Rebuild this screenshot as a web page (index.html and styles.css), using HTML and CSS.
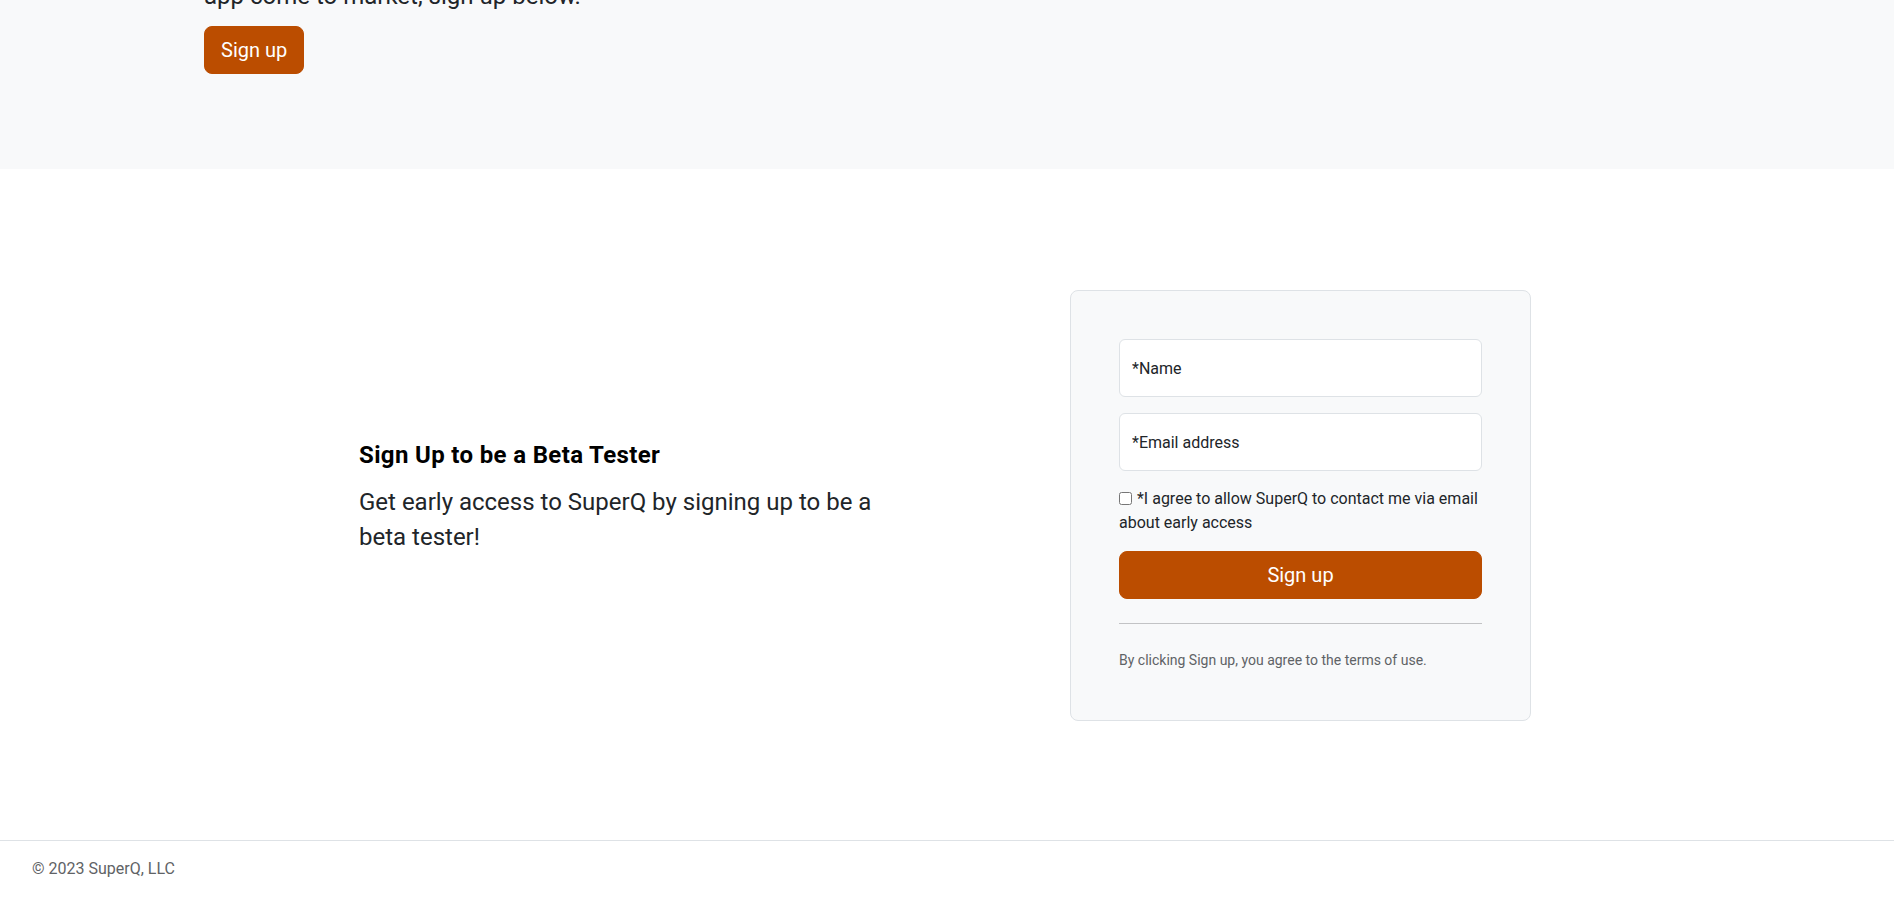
FILE: index.html
```html
<!DOCTYPE html>
<html lang="en">
<head>
<meta charset="utf-8">
<title>SuperQ</title>
<link rel="stylesheet" href="styles.css">
</head>
<body>
  <section class="intro">
    <div class="intro-inner">
      <p class="intro-lead">SuperQ is a new way to keep track of your queue. To be notified when the<br>app come to market, sign up below.</p>
      <a class="btn btn-lg" href="#signup">Sign up</a>
    </div>
  </section>

  <main class="hero" id="signup">
    <div class="hero-text">
      <h2 class="hero-title">Sign Up to be a Beta Tester</h2>
      <p class="hero-lead">Get early access to SuperQ by signing up to be a beta tester!</p>
    </div>
    <form class="signup-card">
      <input class="field" type="text" placeholder="*Name">
      <input class="field" type="email" placeholder="*Email address">
      <div class="agree">
        <label><input class="agree-box" type="checkbox"> *I agree to allow SuperQ to contact me via email about early access</label>
      </div>
      <button class="btn btn-lg btn-block" type="button">Sign up</button>
      <hr class="divider">
      <div class="terms">By clicking Sign up, you agree to the terms of use.</div>
    </form>
  </main>

  <footer class="site-footer">
    <span class="copyright">© 2023 SuperQ, LLC</span>
  </footer>
</body>
</html>
```
FILE: styles.css
```css
* { box-sizing: border-box; }

html, body {
  margin: 0;
  padding: 0;
}

body {
  font-family: Roboto, "Liberation Sans", sans-serif;
  font-size: 16px;
  line-height: 24px;
  color: #212529;
  background: #ffffff;
}

/* top band */
.intro {
  background: #f8f9fa;
  height: 169px;
  overflow: hidden;
}

.intro-inner {
  width: 1486px;
  margin: 0 auto;
  height: 169px;
  display: flex;
  flex-direction: column;
  justify-content: flex-end;
  align-items: flex-start;
  padding-bottom: 95px;
}

.intro-lead {
  font-size: 24px;
  line-height: 36px;
  margin: 0 0 12px;
}

.btn {
  display: inline-block;
  background: #bb4d00;
  color: #ffffff;
  border: 1px solid #bb4d00;
  text-decoration: none;
  font-family: inherit;
  cursor: pointer;
  text-align: center;
}

.btn-lg {
  font-size: 20px;
  line-height: 30px;
  padding: 8px 16px;
  border-radius: 8px;
}

.btn-block {
  display: block;
  width: 100%;
}

/* hero */
.hero {
  width: 1176px;
  margin: 0 auto;
  padding: 121px 4px 119px 0;
  display: grid;
  grid-template-columns: 1fr 461px;
  align-items: center;
}

.hero-text {
  max-width: 540px;
}

.hero-title {
  font-size: 24px;
  line-height: 29px;
  font-weight: 700;
  letter-spacing: 0.35px;
  color: #000000;
  margin: 0 0 15px;
}

.hero-lead {
  font-size: 24px;
  line-height: 35px;
  margin: 0 0 15px;
}

.signup-card {
  background: #f8f9fa;
  border: 1px solid #dee2e6;
  border-radius: 8px;
  padding: 48px;
  margin: 0;
}

.field {
  display: block;
  width: 100%;
  height: 58px;
  margin: 0 0 16px;
  padding: 0 12px;
  background: #ffffff;
  border: 1px solid #dee2e6;
  border-radius: 6px;
  font-family: inherit;
  font-size: 16px;
  color: #212529;
}

.field::placeholder {
  color: #212529;
  opacity: 1;
}

.agree {
  margin-bottom: 16px;
  font-size: 16px;
  line-height: 24px;
  color: #212529;
}

.agree-box {
  width: 13px;
  height: 13px;
  margin: 0 1px 0 0;
  vertical-align: -1px;
}

.divider {
  margin: 24px 0;
  border: 0;
  border-top: 1px solid #212529;
  opacity: 0.25;
}

.terms {
  font-size: 14px;
  line-height: 24px;
  color: #5f6366;
}

/* footer */
.site-footer {
  border-top: 1px solid #dee2e6;
  padding: 16px 32px;
}

.copyright {
  color: #5f6366;
  font-size: 16px;
  line-height: 24px;
}
```
